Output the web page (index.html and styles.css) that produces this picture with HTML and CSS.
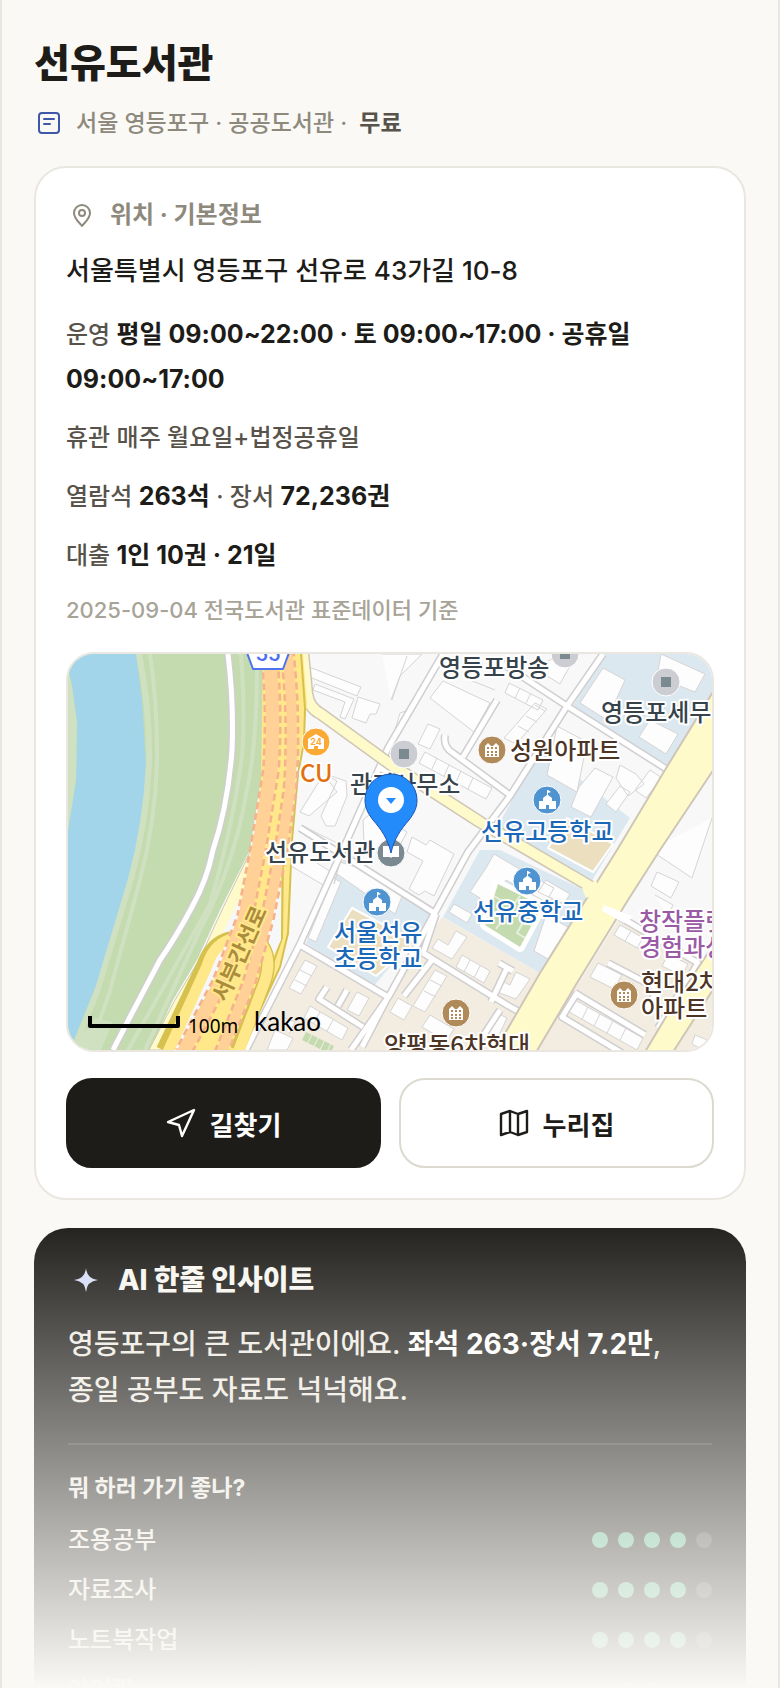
FILE: index.html
```html
<!DOCTYPE html>
<html lang="ko">
<head>
  <title>선유도서관</title>
  <meta charset="UTF-8">
  <meta name="viewport" content="width=device-width, initial-scale=1">
  <link rel="stylesheet" href="styles.css">
</head>

<body>
  <main class="page">
    <h1>선유도서관</h1>
    <div class="sub">
      <svg class="icon-sub" viewBox="0 0 30 30"><rect x="5" y="5" width="20" height="20" rx="3"/><path d="M10 11h10M10 16h6"/></svg>
      <span>서울 영등포구 · 공공도서관 ·</span>
      <b>무료</b>
    </div>

    <section class="card">
      <h2 class="card-title">
        <svg class="icon-pin" viewBox="0 0 32 32"><path d="M16 27c-2-3-8-7-8-13a8 8 0 0 1 16 0c0 6-6 10-8 13z"/><circle cx="16" cy="14" r="3"/></svg>
        위치 · 기본정보
      </h2>
      <p class="address">서울특별시 영등포구 선유로 43가길 10-8</p>
      <p class="row">운영 <b>평일 09:00~22:00 · 토 09:00~17:00 · 공휴일 09:00~17:00</b></p>
      <p class="row">휴관 매주 월요일+법정공휴일</p>
      <p class="row">열람석 <b>263석</b> · 장서 <b>72,236권</b></p>
      <p class="row">대출 <b>1인 10권 · 21일</b></p>
      <p class="source">2025-09-04 전국도서관 표준데이터 기준</p>

      <div class="map">
        <svg viewBox="68 654 644 396" preserveAspectRatio="xMidYMid slice">
          <defs>
            <g id="school">
              <circle r="14" fill="#4f94d1" stroke="#fff"/>
              <path fill="#fff" d="M-8 9V1h4v-3l4-3v-5h1l3 2-3 1v2l4 3v3h4v8h-7V5h-3v4z"/>
            </g>
            <g id="apt">
              <circle r="14" fill="#b08a58" stroke="#fff"/>
              <path fill="#fff" d="M-7 7V-4l3-3 3 3h2l3-3 3 3V7z"/>
              <path stroke="#b08a58" stroke-width="2" stroke-dasharray="2 2" d="M-5-2H6M-5 2H6M-5 5H6"/>
            </g>
            <g id="office">
              <circle r="14" fill="#cccdd2" stroke="#fff"/>
              <path fill="#7b8a91" d="M-5-5H5V5H-5z"/>
            </g>
          </defs>

          <!-- ground -->
          <path fill="#f8f8f8" d="M68 654h644v396H68z"/>
          <path fill="#c4dbb0" d="M68 654h195l3 69-4 50-12 77-30 60-23 50-24 40-23 50H68z"/>
          <path fill="#a2d5ea" d="M68 668l4 18 5 37-1 57-8 50v212l5 0 24-59 26-73 12-50 8-43 3-50-4-67-6-46H68z"/>
          <path fill="#cfe1c0" d="M68 668l4 18 5 37-1 57-8 50z"/>
          <g fill="none" stroke="#cfe1c0" stroke-width="6">
            <path d="M139 654q11 55 10 110-3 60-18 115l-33 110-24 60"/>
            <path stroke-width="4" d="M150 654q8 55 7 110-2 60-18 120l-30 110-20 56"/>
            <path stroke-width="4" d="M241 654q5 70 0 110-10 70-31 140l-47 84-35 62"/>
            <path stroke-width="4" d="M257 670q0 75-11 125-12 70-46 135l-55 120"/>
          </g>
          <path fill="#cfe1c0" d="M70 1050l25-32 18 4-12 28z"/>
          <path class="casing" d="M228 654q6 50 4 96-4 55-19 100-6 30-21 57-16 30-32 53l-30 57-17 33"/>
          <path class="lane" d="M228 654q6 50 4 96-4 55-19 100-6 30-21 57-16 30-32 53l-30 57-17 33"/>

          <!-- districts -->
          <path fill="#f2ece1" d="M300 945l85 52 57-80 98 56-46 77H247z"/>
          <path fill="#f2ece1" d="M620 917l92 48v85H537z"/>
          <g fill="#dbe8f0">
            <path d="M603 654h109v39l-44 72-96-58z"/>
            <path d="M540 748l90 70-40 66-92-58z"/>
            <path d="M480 850l20 0 90 43-50 80-97-56z"/>
            <path d="M343 860l90 55-60 72-67-44z"/>
          </g>

          <!-- buildings -->
          <g class="building">
            <path d="M309 667l52 20-4 9-50-20zM315 684l39 15-9 20-5-2 5-15-32-12zM358 697l22 7-4 10-6 0-4 9-14-5z"/>
            <path d="M328 780l9 12-28 24-9-4 20-32zM325 774l12 7-16 35 5 10 9 0 12-30-1-15zM303 826l50 25-3 6-50-25z"/>
            <path d="M391 700l9-24 22-22h-40M392 700l15-44M443 681l47 22-16 29-44-34zM470 680l25 10M400 713l6-2-16 36z"/>
            <path d="M509 683l34 17-5 10-33-17zM520 688l-5 10M531 693l-5 10M535 703l12 6-31 35-12-6zM545 711l-10-6M537 722l-11-6M529 732l-11-6"/>
            <path d="M428 724l12 5-10 20-12-5zM425 752l67 36-6 11-67-36zM437 758l-5 11M449 765l-5 11M461 771l-5 11M473 778l-5 11"/>
            <path d="M556 656l16 6-12 22-24-15zM603 668l22 12-18 40-27-17zM661 654l44 20-10 18-38-15zM650 720l28 14-12 20-27-17z"/>
            <path d="M557 726l30 16-10 50-30-17zM595 768l18 9-22 40-20-10 8-20zM620 765l16 9 8 10-16 12-12-18zM620 786l10 6-14 20-10-8zM650 770l12 8-16 20-11-8z"/>
            <path d="M363 820l10-8 34 20-15 28-28-16zM412 837l14 8 4-5 24 14-20 42-9-5-6 4-10-6 14-28-16-9z"/>
            <path d="M291 866l6-16 34 22-6 14zM340 862l20 6 43 26-8 20-58-40-3 10zM333 878l8 4-25 60-8-4z"/>
            <path d="M494 854l34 20 26 14-8 14-40-22-22 36-10-6 6-12-10-6 16-24zM454 904l18 10-5 9-18-11zM546 880l24 14-6 10-26-12zM546 915l22 12-20 32-14-8z"/>
            <path d="M650 850l42 28 20-60M657 872l22 10-8 16-20-12zM655 895l18 10-6 12"/>
            <path d="M305 960l12 6-16 28-12-6zM300 970l12 6M295 980l12 6M357 992l12 6-10 18-12-6zM310 1006l38 22-6 12-38-22zM320 1012l-6 11M333 1020l-6 11"/>
            <path d="M456 931l11 6-15 22-20-11 6-9 10 6zM462 955l28 16-6 12-28-16zM470 960l-6 12M480 966l-6 12M435 970l12 6-22 36-12-6zM430 980l12 6M424 991l12 6"/>
            <path d="M516 972l14 7-14 20-22-8 6-11 10 5zM398 998l14 8-8 14-14-8zM430 1015l24 14-8 12-24-14zM495 1012l12 6-14 30-12-6z"/>
            <path d="M620 925l36 20-6 10-36-20zM631 931l-6 10M643 938l-6 10M598 963l24 12-8 14-24-12zM575 1000l68 38-6 12-68-38zM588 1007l-6 12M600 1014l-6 12M613 1021l-6 12M626 1028l-6 12M668 954l20 10-6 12-20-10zM695 1035l15 6-6 9-12-6z"/>
            <path d="M275 1030l18 8-6 12h-20zM285 1018l10 4-6 12"/>
          </g>
          <path fill="#ebdfbf" stroke="#fff" stroke-width="2" d="M352 908l64 34-40 34-48-29z"/>
          <path fill="#ebdfbf" stroke="#fff" stroke-width="2" d="M567 818l46 26-20 28-45-24z"/>
          <path class="field" d="M498 884l44 22-22 41-35-22z"/>
          <path fill="none" stroke="#e6f0dd" stroke-width="2" d="M520 896l-24 33M494 896l10 6-8 12M532 926l-8-5-7 12 8 5"/>
          <path stroke="#c4dbb0" stroke-width="9" stroke-dasharray="6 1" d="M304 1036l28 14"/>

          <!-- small streets -->
          <g>
            <path class="casing" d="M443 654l-55 94-40 90-48 106-54 106M603 654l-36 52-57 90-42 56-35 64-44 80-38 54M500 662l67 44 101 64M445 735q-2 12 8 18l57 42M463 757l34-57M300 828l136 86M300 945l88 52-26 50M327 987l-8 12 44 28M347 990l-9 16M423 953l84 52 18 10M436 914l-13 39M432 960l-28 36M507 968l-16 34M499 963l14 8M575 993l70 42M577 993l-15 24 60 36M608 963l50 26-14 24M620 917l78 46-40 65M378 767l22 12M500 1010l-26 40"/>
            <path class="lane" d="M443 654l-55 94-40 90-48 106-54 106M603 654l-36 52-57 90-42 56-35 64-44 80-38 54M500 662l67 44 101 64M445 735q-2 12 8 18l57 42M463 757l34-57M300 828l136 86M300 945l88 52-26 50M327 987l-8 12 44 28M347 990l-9 16M423 953l84 52 18 10M436 914l-13 39M432 960l-28 36M507 968l-16 34M499 963l14 8M575 993l70 42M577 993l-15 24 60 36M608 963l50 26-14 24M620 917l78 46-40 65M378 767l22 12M500 1010l-26 40"/>
          </g>

          <!-- yellow roads -->
          <path fill="none" stroke="#cfc6b8" stroke-width="13" d="M303 654l4 40q2 14 14 20l69 50 90 58 113 66"/>
          <path fill="none" stroke="#fefac9" stroke-width="10" d="M303 654l4 40q2 14 14 20l69 50 90 58 120 70"/>
          <path fill="#fefac9" stroke="#cfc6b8" stroke-width="2" d="M716 687l-48 78-51 85-77 123-47 81h42l42-71 51-83 32-50 56-84z"/>
          <path fill="#fefac9" d="M582 888l14-8 4 12-14 6z"/>
          <path fill="#fff" d="M604 905l30 12-10 6-22-12z"/>
          <path fill="#fefac9" stroke="#cfc6b8" stroke-width="2" d="M714 944l-44 66-25 42h28l41-64z"/>

          <!-- expressway -->
          <path fill="#fefac9" stroke="#cfc6b8" d="M252 848l14-15-12 70-30 60-40 87h-35l26-50 24-40 23-50z"/>
          <path fill="#ffe88a" d="M263 654h40l4 50-4 40-8 30-4 70-2 90-10 33-34 83h-62l40-80 25-70 8-70 5-50z"/>
          <path fill="none" stroke="#d6c04e" stroke-width="2" d="M301 654l4 54-1 34-6 32-6 66-4 93-8 34-20 43-20 40M283 850l-1 88-14 40"/>
          <path fill="#f6f7f8" d="M268 900l13-30v70l-14 30-8-22zM239 900l5 0-22 62-28 60-8 20-4 8h-10l28-70z"/>
          <path fill="none" stroke="#d6c04e" stroke-width="14" d="M231 938q-20 5-28 28l-40 84M262 945q10 14 3 36l-28 69"/>
          <path fill="none" stroke="#ffe88a" stroke-width="11" d="M236 938q-22 4-29 28l-40 88M262 945q10 14 3 36l-28 74"/>
          <path fill="#f6f7f8" d="M228 940l-4 26-38 84h-9l34-74q6-14 10-22z"/>
          <g fill="none">
            <path stroke="#f5b28c" stroke-width="18" stroke-dasharray="7 4" d="M269 650q6 60 2 120l-13 80-13 67-25 66-37 70"/>
            <path stroke="#ffd196" stroke-width="13" d="M269 650q6 60 2 120l-13 80-13 67-25 66-37 70"/>
            <path stroke="#f5b28c" stroke-width="15" stroke-dasharray="7 4" d="M287 650q8 70 3 140l-9 60-14 70-18 63-28 70"/>
            <path stroke="#ffd196" stroke-width="10" d="M287 650q8 70 3 140l-9 60-14 70-18 63-28 70"/>
          </g>
          <path fill="#fff" stroke="#4f74ee" stroke-width="2" d="M246 650l7 19h30l7-19z"/>
          <text class="shield" x="268" y="661" text-anchor="middle">55</text>

          <!-- places -->
          <use href="#office" x="565" y="654"/>
          <use href="#office" x="666" y="682"/>
          <use href="#office" x="404" y="754"/>
          <use href="#apt" x="492" y="750"/>
          <use href="#apt" x="624" y="995"/>
          <use href="#apt" x="456" y="1013"/>
          <use href="#school" x="547" y="800"/>
          <use href="#school" x="527" y="881"/>
          <use href="#school" x="377" y="902"/>
          <circle cx="316" cy="742" r="14" fill="#fba935" stroke="#fff"/>
          <path fill="#fff" d="M308 749v-10l8-5 8 5v10h-6v-3h-4v3z"/>
          <text class="tiny" x="316" y="745" text-anchor="middle">24</text>
          <circle cx="391" cy="853" r="14" fill="#7b8a91" stroke="#fff"/>
          <path fill="#fff" d="M383 846h7l1 1 1-1h7v11h-7l-1 1-1-1h-7z"/>

          <g class="place">
            <text x="439" y="676">영등포방송</text>
            <text x="601" y="721">영등포세무서</text>
            <text x="350" y="793">관리사무소</text>
            <text x="265" y="861">선유도서관</text>
          </g>
          <g class="place brown">
            <text x="510" y="759">성원아파트</text>
            <text x="641" y="991">현대2차</text>
            <text x="641" y="1017">아파트</text>
            <text x="384" y="1054">양평동6차현대</text>
          </g>
          <g class="place blue">
            <text x="481" y="840">선유고등학교</text>
            <text x="473" y="920">선유중학교</text>
            <text x="334" y="941">서울선유</text>
            <text x="334" y="967">초등학교</text>
          </g>
          <g class="place purple">
            <text x="639" y="930">창작플랫폼</text>
            <text x="639" y="956">경험과상상</text>
          </g>
          <text class="place orange" x="300" y="782">CU</text>
          <text class="road-name" transform="translate(226 1003) rotate(-66)">서부간선로</text>

          <!-- current library -->
          <path fill="#248bfb" stroke="#1a56b5" d="M391 853c-3-14-10-24-18-33-6-8-8-13-8-20a26 26 0 0 1 52 0c0 7-2 12-8 20-8 9-15 19-18 33z"/>
          <circle cx="391" cy="800" r="13" fill="#fff"/>
          <path fill="#248bfb" d="M386 798h10l-5 6z"/>

          <path fill="none" stroke="#000" stroke-width="4" d="M90 1016v10h88v-10"/>
          <text class="scale" x="188" y="1033">100m</text>
          <text class="brand" x="254" y="1031">kakao</text>
        </svg>
      </div>

      <div class="actions">
        <a class="btn btn-dark" href="#">
          <svg class="icon-btn" viewBox="0 0 30 30"><path d="M28 2L2 14l11 3 3 11z"/></svg>
          길찾기
        </a>
        <a class="btn" href="#">
          <svg class="icon-btn" viewBox="0 0 30 30"><path d="M2 6l9-3 8 3 9-3v21l-9 3-8-3-9 3zM11 3v21M19 6v21"/></svg>
          누리집
        </a>
      </div>
    </section>

    <section class="insight">
      <h2 class="insight-title">
        <svg class="icon-star" viewBox="0 0 36 36"><path d="M18 6q1 11 12 12-11 1-12 12-1-11-12-12 11-1 12-12z"/></svg>
        AI 한줄 인사이트
      </h2>
      <p class="insight-text">영등포구의 큰 도서관이에요. <b>좌석 263·장서 7.2만</b>, 종일 공부도 자료도 넉넉해요.</p>
      <h3>뭐 하러 가기 좋나?</h3>
      <ul class="scores">
        <li>조용공부 <span class="dots"><i></i><i></i><i></i><i></i><i class="off"></i></span></li>
        <li>자료조사 <span class="dots"><i></i><i></i><i></i><i></i><i class="off"></i></span></li>
        <li>노트북작업 <span class="dots"><i></i><i></i><i></i><i></i><i class="off"></i></span></li>
        <li>아이랑 <span class="dots"><i></i><i></i><i></i><i class="off"></i><i class="off"></i></span></li>
      </ul>
    </section>
    <div class="fade"></div>
  </main>
</body>
</html>
```

FILE: styles.css
```css
* {
  box-sizing: border-box;
}
body {
  margin: 0;
  font-family: Inter, "Noto Sans CJK KR", sans-serif;
  font-weight: 500;
  word-break: keep-all;
  background-color: #faf9f5;
  color: #1d1c18;
}
h1, h2, h3, p, ul {
  margin: 0;
  padding: 0;
}
.page {
  position: relative;
  height: 100vh;
  overflow: hidden;
  padding: 36px 32px 0;
  border-left: 2px solid #e9e7e0;
  border-right: 2px solid #e9e7e0;
}
h1 {
  font-size: 39px;
  font-weight: 800;
  line-height: 54px;
}
.sub {
  display: flex;
  align-items: center;
  gap: 12px;
  margin-top: 14px;
  font-size: 23px;
  line-height: 38px;
  color: #8e897d;
}
.sub b {
  color: #57534a;
}
svg {
  display: block;
  flex: none;
  fill: none;
  stroke-linecap: round;
  stroke-linejoin: round;
}
.icon-sub {
  width: 30px;
  height: 30px;
  stroke: #3f57a8;
  stroke-width: 2;
}
.card {
  margin-top: 24px;
  padding: 30px;
  background-color: #fff;
  border: 2px solid #e9e7e0;
  border-radius: 32px;
}
.card-title {
  display: flex;
  align-items: center;
  gap: 12px;
  font-size: 24px;
  line-height: 34px;
  color: #8e897d;
}
.icon-pin {
  width: 32px;
  height: 32px;
  stroke: #8e897d;
  stroke-width: 2;
}
.address {
  margin-top: 18px;
  font-size: 26px;
  line-height: 42px;
}
.row {
  margin-top: 14px;
  font-size: 24px;
  line-height: 44px;
  color: #57534a;
}
.address + .row {
  margin-top: 20px;
}
.row b {
  font-size: 25px;
  color: #1d1c18;
}
.source {
  margin-top: 14px;
  font-size: 22px;
  line-height: 36px;
  color: #a8a397;
}

/* map */
.map {
  height: 400px;
  margin-top: 24px;
  border: 2px solid #e9e7e0;
  border-radius: 28px;
  overflow: hidden;
}
.map svg {
  width: 100%;
  height: 100%;
  stroke-linecap: butt;
}
.casing {
  stroke: #d0ced0;
  stroke-width: 8;
}
.lane {
  stroke: #fff;
  stroke-width: 5;
}
.building {
  fill: #fdfdfd;
  stroke: #d6d4d4;
  stroke-width: 1;
}
.field {
  fill: #c4dbb0;
  stroke: #fff;
  stroke-width: 10;
  paint-order: stroke;
}
.place, .road-name {
  font-size: 24px;
  font-family: "Noto Sans CJK KR", sans-serif;
  font-weight: 500;
  fill: #37434b;
  stroke: #fff;
  stroke-width: 4;
  paint-order: stroke;
}
.brown {
  fill: #4d3526;
}
.blue {
  fill: #1c68b8;
}
.purple {
  fill: #9a5aa5;
}
.orange {
  fill: #e3700f;
}
.road-name {
  font-size: 22px;
  font-weight: 700;
  fill: #ab8b3c;
  stroke: #ffe88a;
}
.shield {
  font-size: 20px;
  font-weight: 600;
  fill: #4f6ff0;
}
.tiny {
  font-size: 9px;
  font-weight: 700;
  fill: #fba935;
}
.scale, .brand {
  font-family: "Noto Sans", sans-serif;
  font-size: 19px;
  font-weight: 400;
  fill: #000;
}
.brand {
  font-family: Lato, sans-serif;
  font-size: 26px;
}

.actions {
  display: grid;
  grid-template-columns: 1fr 1fr;
  gap: 18px;
  margin-top: 26px;
}
.btn {
  display: flex;
  align-items: center;
  justify-content: center;
  gap: 14px;
  height: 90px;
  border: 2px solid #dcd9d0;
  border-radius: 26px;
  font-size: 26px;
  font-weight: 700;
  color: #1d1c18;
  text-decoration: none;
}
.btn-dark {
  background-color: #1d1c18;
  border-color: #1d1c18;
  color: #fff;
}
.icon-btn {
  width: 30px;
  height: 30px;
  stroke: currentColor;
  stroke-width: 2.4;
}

/* AI insight */
.insight {
  margin-top: 28px;
  padding: 34px;
  background-color: #1d1c18;
  border-radius: 34px;
  color: #efece4;
}
.insight-title {
  display: flex;
  align-items: center;
  gap: 14px;
  font-size: 28px;
  line-height: 36px;
  font-weight: 800;
  color: #f8f6f0;
}
.icon-star {
  width: 36px;
  height: 36px;
  fill: #d5ddf8;
}
.insight-text {
  margin-top: 23px;
  font-size: 28px;
  line-height: 46px;
}
.insight-text b {
  color: #fff;
}
.insight h3 {
  margin-top: 30px;
  padding-top: 26px;
  border-top: 2px solid #3a3935;
  font-size: 23px;
  line-height: 34px;
}
.scores {
  margin-top: 10px;
  list-style: none;
  font-size: 24px;
  line-height: 34px;
}
.scores li {
  display: flex;
  align-items: center;
  justify-content: space-between;
  height: 50px;
}
.dots {
  display: flex;
  gap: 10px;
}
.dots i {
  width: 16px;
  height: 16px;
  border-radius: 50%;
  background-color: #5cb58f;
}
.dots i.off {
  background-color: #45443f;
}
.fade {
  position: absolute;
  left: -2px;
  right: -2px;
  bottom: 0;
  height: 476px;
  background: linear-gradient(rgba(250, 249, 245, 0), #faf9f5);
  pointer-events: none;
}
```
